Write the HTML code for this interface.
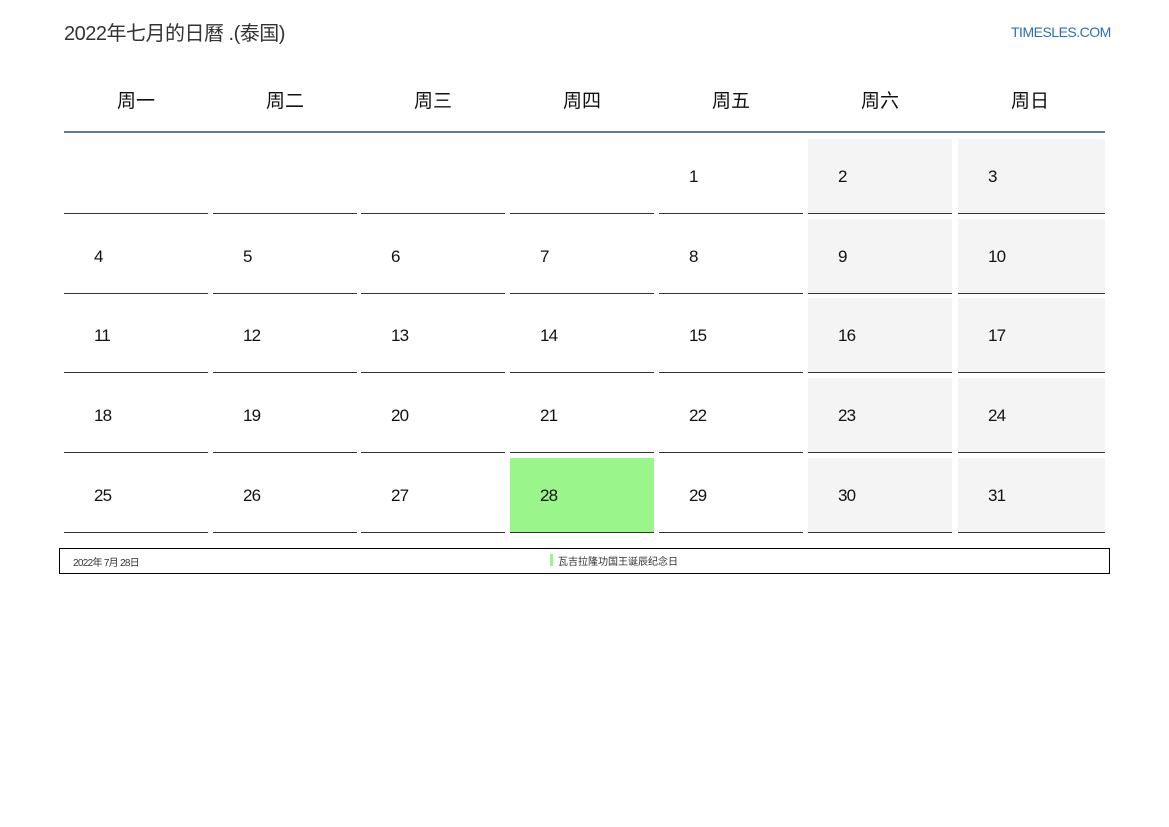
<!DOCTYPE html>
<html><head><meta charset="utf-8"><style>
body{margin:0;width:1169px;height:827px;background:#fff;position:relative;font-family:"Liberation Sans","Noto Sans CJK SC",sans-serif;overflow:hidden}
.a{position:absolute}
.title{left:64px;top:17px;font-size:20px;color:#333;letter-spacing:-0.5px}
.logo{left:1011px;top:24px;font-size:14px;color:#2a6ebb;letter-spacing:-0.5px}
.hd{top:86px;font-size:19px;color:#111;text-align:center;width:144px}
.cell{border-bottom:1px solid #333;height:74px;width:144px}
.w{background:#f4f4f4}
.n{position:absolute;left:30px;top:28px;font-size:17px;color:#111;letter-spacing:-0.8px}
</style></head><body>
<div class="a title">2022年七月的日曆 .(泰国)</div>
<div class="a logo">TIMESLES.COM</div>
<div class="a hd" style="left:64px">周一</div>
<div class="a hd" style="left:213px">周二</div>
<div class="a hd" style="left:361px">周三</div>
<div class="a hd" style="left:510px">周四</div>
<div class="a hd" style="left:659px">周五</div>
<div class="a hd" style="left:808px">周六</div>
<div class="a hd" style="left:958px">周日</div>
<div class="a" style="left:64px;top:131px;width:1041px;height:2px;background:#5b7aa3"></div>
<div id="g"></div>
<script>
var xs=[64,213,361,510,659,808,958],ys=[139,219,298,378,458],h='';
var d=1-5;
for(var r=0;r<5;r++)for(var c=0;c<7;c++){d++;var cls='a cell'+(c>=5?' w':'');var st='left:'+xs[c]+'px;top:'+ys[r]+'px;'+(c==6?'width:147px;':'');if(d==28)st+='background:#9af68a;';h+='<div class="'+cls+'" style="'+st+'">'+(d>=1?'<span class="n">'+d+'</span>':'')+'</div>';}
document.getElementById('g').innerHTML=h;
</script>
<div class="a" style="left:59px;top:548px;width:1049px;height:24px;border:1px solid #000"></div>
<div class="a" style="left:73px;top:554px;font-size:10px;color:#333;letter-spacing:-0.7px">2022年 7月 28日</div>
<div class="a" style="left:550px;top:554px;width:3px;height:12px;background:#9af68a"></div>
<div class="a" style="left:558px;top:553px;font-size:10px;color:#333">瓦吉拉隆功国王诞辰纪念日</div>
</body></html>
